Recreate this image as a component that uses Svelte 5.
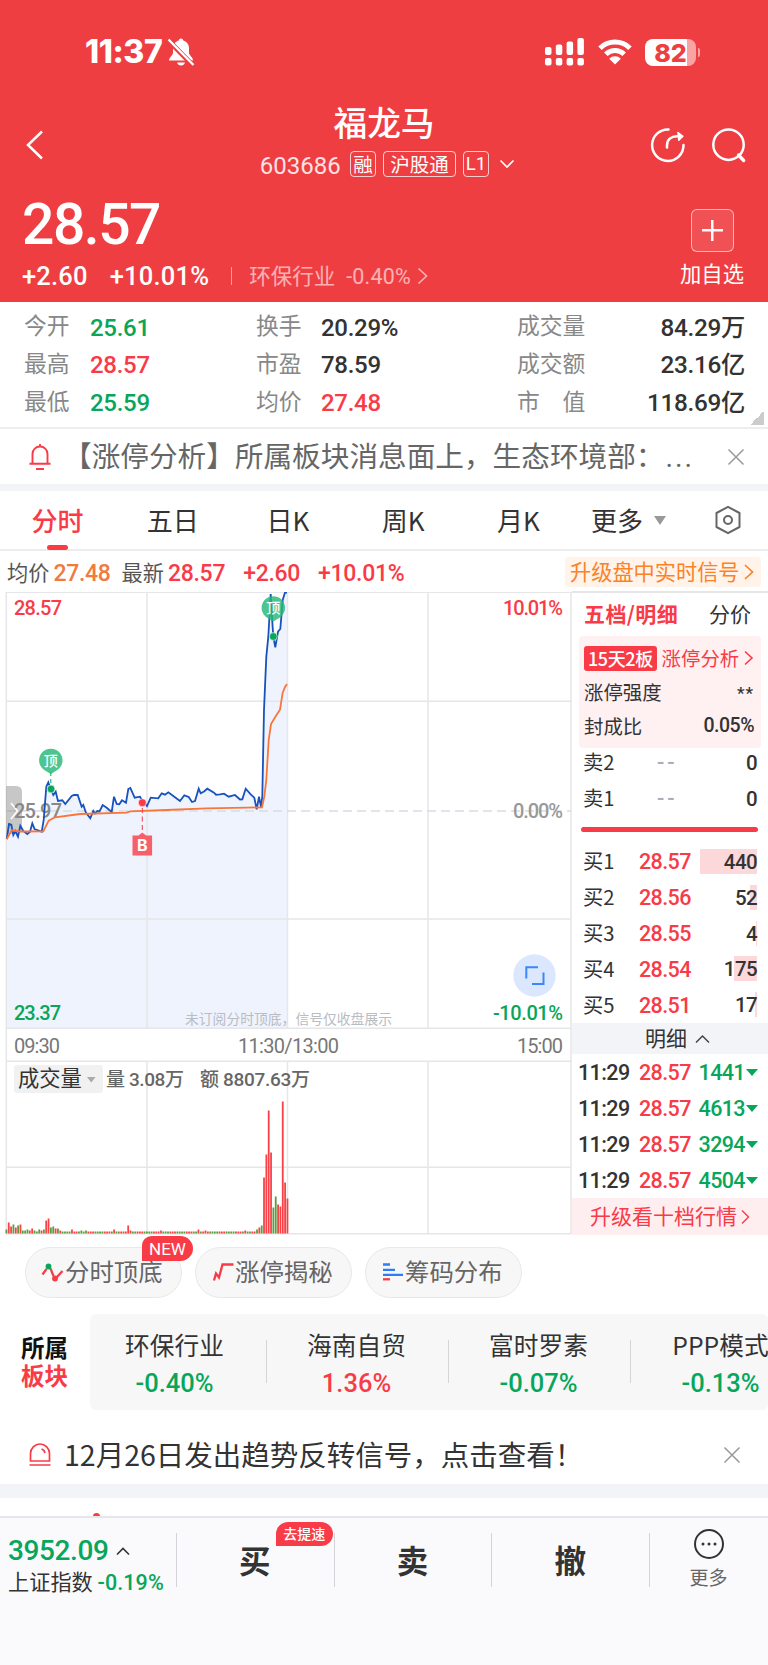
<script lang="ts">
  const stats = [
    [
      { label: "今开", value: "25.61", tone: "down" },
      { label: "换手", value: "20.29%", tone: "" },
      { label: "成交量", value: "84.29万", tone: "" },
    ],
    [
      { label: "最高", value: "28.57", tone: "up" },
      { label: "市盈", value: "78.59", tone: "" },
      { label: "成交额", value: "23.16亿", tone: "" },
    ],
    [
      { label: "最低", value: "25.59", tone: "down" },
      { label: "均价", value: "27.48", tone: "up" },
      { label: "市　值", value: "118.69亿", tone: "" },
    ],
  ];

  const tabs = ["分时", "五日", "日K", "周K", "月K"];

  const asks = [
    { name: "卖2", price: "--", amount: 0 },
    { name: "卖1", price: "--", amount: 0 },
  ];

  const bids = [
    { name: "买1", price: "28.57", amount: 440 },
    { name: "买2", price: "28.56", amount: 52 },
    { name: "买3", price: "28.55", amount: 4 },
    { name: "买4", price: "28.54", amount: 175 },
    { name: "买5", price: "28.51", amount: 17 },
  ];
  const maxBid = 440;

  const trades = [
    { time: "11:29", price: "28.57", amount: 1441 },
    { time: "11:29", price: "28.57", amount: 4613 },
    { time: "11:29", price: "28.57", amount: 3294 },
    { time: "11:29", price: "28.57", amount: 4504 },
  ];

  const sectors = [
    { name: "环保行业", change: "-0.40%" },
    { name: "海南自贸", change: "1.36%" },
    { name: "富时罗素", change: "-0.07%" },
    { name: "PPP模式", change: "-0.13%" },
  ];

  const priceLine =
    "6.7,247 9,232 11.3,232.7 13.3,243 15.3,239 18,244.7 20.3,233.7 23.3,239 27.3,242 30,239.7 32.3,231.3 34.7,237.3 37.3,238 41.7,239.7 43.7,228 46.3,194.7 48.3,190.3 50.7,197 53.3,203 55.7,199.7 58,209 62.3,208.3 65.3,212 71.7,204 74,203 77.7,203 81.7,214.7 83.3,213 86,220.7 90.3,226.3 93.3,219 95,221.5 97.3,219 99.5,219.5 102.7,213 106.7,215.7 111.7,220 114,204.7 116.7,212 119.3,212.3 122,208.3 126,210.7 128.3,197 130.3,196 134.7,205.7 140,204.7 142.3,208.7 147,214 150.7,205.7 158.3,206.3 161.7,201.3 165,202.7 168.3,200.3 173.3,204 180,209 184.3,203.3 188.7,205 192,210 195,209 198.7,196.7 200.7,201.3 204,199.5 207.3,196.7 214,200.7 216,202.7 220,202.3 224,201.7 228.7,204.7 235,203 240,207.5 242.3,207.3 245.7,196.7 250.7,202.3 254.3,205.7 256.7,217.3 259,204.7 261,214.7 262.3,204.7 264,118 266.3,64.7 268.3,44.7 270.7,2 272.3,29.7 273.3,44.7 275.3,55.3 278,39.7 280.3,37 282.7,8 285,0.5 287,0.5";

  const averageLine =
    "6.7,247.3 11.7,238.3 20,239.5 43.3,239.3 48.7,228.7 55,225.3 80,222 126.7,220.7 130,219.3 166.7,218 206.7,216.3 246.7,215.7 262,215.3 264.3,204.7 266.3,188 268.7,148 271,132 276,123.7 280,117.7 282.7,100.7 285,95 287,92";

  // one bar a minute; quiet minutes fall back to a two pixel bar
  const peaks: Record<number, [number, string]> = {
    0: [4, "g"], 1: [11, "r"], 2: [7, "r"], 3: [9, "g"], 4: [6, "r"], 5: [8, "g"],
    6: [9, "r"], 7: [3, "g"], 8: [3, "g"], 9: [4, "g"], 10: [3, "r"], 11: [5, "r"],
    12: [3, "g"], 14: [4, "g"], 15: [3, "r"], 16: [4, "g"], 17: [13, "r"], 18: [15, "r"],
    19: [6, "g"], 20: [7, "g"], 21: [5, "r"], 22: [5, "g"], 23: [3, "r"], 28: [4, "r"],
    32: [3, "g"], 34: [3, "g"], 46: [4, "r"], 52: [8, "r"], 53: [3, "r"], 66: [3, "r"],
    82: [4, "r"], 85: [3, "r"], 102: [3, "r"], 107: [4, "g"], 108: [6, "r"], 109: [8, "g"],
    110: [56, "r"], 111: [79, "r"], 112: [123, "r"], 113: [81, "r"], 114: [26, "g"],
    115: [37, "g"], 116: [29, "r"], 117: [27, "r"], 118: [132, "r"], 119: [51, "r"], 120: [35, "r"],
  };
  const volumes = Array.from({ length: 121 }, (_, i) => {
    const [height, tone] = peaks[i] ?? [2, i % 7 < 3 ? "r" : "g"];
    return { x: 5.5 + i * 2.342, height, fill: tone === "r" ? "#fb4148" : "#5a9e3d" };
  });
</script>

<div class="page">
  <header>
    <div class="status">
      <span class="clock">11:37</span>
      <svg class="mute" width="28" height="30" viewBox="0 0 28 30">
        <path d="M14 1.500c-1.300 0-2 .8-2.300 1.900C8 4.500 6 7.500 6 11v5c0 2-4 4.500-4 7.500h24c0-3-4-5.500-4-7.500v-5c0-3.500-2-6.500-5.700-7.600-.3-1.100-1-1.900-2.300-1.900zM10 25.500h8c-.6 2-2 3-4 3s-3.400-1-4-3z" fill="#fff" />
        <path d="M1.500 3.500 26 28.500" stroke="#ef3e41" stroke-width="5" />
        <path d="M1.500 2.500 26.500 28" stroke="#fff" stroke-width="2.300" />
      </svg>
      <div class="spacer"></div>
      <svg width="40" height="28" viewBox="0 0 40 28" fill="#fff">
        <rect x="0" y="9" width="6.500" height="8" rx="2" />
        <rect x="10.800" y="6.500" width="6.500" height="10.500" rx="2" />
        <rect x="21.600" y="3.500" width="6.500" height="13.500" rx="2" />
        <rect x="32.400" y="0" width="6.500" height="17" rx="2" />
        <rect x="0" y="20" width="6.500" height="7.500" rx="2" />
        <rect x="10.800" y="20" width="6.500" height="7.500" rx="2" />
        <rect x="21.600" y="20" width="6.500" height="7.500" rx="2" />
        <rect x="32.400" y="20" width="6.500" height="7.500" rx="2" />
      </svg>
      <svg class="wifi" width="36" height="26" viewBox="0 0 36 26">
        <path d="M3 9.200a21.500 21.500 0 0 1 30 0M8.800 15.200a13 13 0 0 1 18.400 0" fill="none" stroke="#fff" stroke-width="5" />
        <path d="M18 25.500l-5.800-5.800a8.300 8.300 0 0 1 11.600 0z" fill="#fff" />
      </svg>
      <div class="battery"><span>82</span></div>
      <i class="cap"></i>
    </div>

    <div class="titlebar">
      <svg class="back" width="20" height="32" viewBox="0 0 20 32">
        <path d="M17 2.500 3 16l14 13.500" fill="none" stroke="#fff" stroke-width="2.500" />
      </svg>
      <div class="name">
        <h1>福龙马</h1>
        <div class="code">
          <span class="num">603686</span>
          <b>融</b><b class="wide">沪股通</b><b class="num">L1</b>
          <svg width="16" height="10" viewBox="0 0 16 10">
            <path d="M1.500 1.500 8 8l6.500-6.500" fill="none" stroke="#fff" stroke-width="1.600" />
          </svg>
        </div>
      </div>
      <div class="actions">
        <svg width="36" height="37" viewBox="0 0 36 37" fill="none" stroke="#fff" stroke-width="2.500" stroke-linecap="round">
          <path d="M18.500 2.500A15.700 15.700 0 1 0 33.500 18" />
          <path d="M17 20.500v-2c0-6 4-9.200 10-9.200h5" />
          <path d="M28 5.500l4.800 3.800-4 4z" fill="#fff" stroke-width="1.500" stroke-linejoin="round" />
        </svg>
        <svg width="36" height="37" viewBox="0 0 36 37" fill="none" stroke="#fff" stroke-width="2.500">
          <circle cx="17.500" cy="17.700" r="15.200" />
          <path d="M27.500 28l5.200 5.500" stroke-width="3.300" stroke-linecap="round" />
        </svg>
      </div>
    </div>

    <div class="quote">
      <div>
        <div class="price num">28.57</div>
        <div class="changes">
          <span class="num">+2.60</span>
          <span class="num pct">+10.01%</span>
          <i></i>
          <span class="industry">环保行业</span>
          <span class="num soft">-0.40%</span>
          <svg width="12" height="18" viewBox="0 0 12 18">
            <path d="M1.500 1.500 9.500 9l-8 7.500" fill="none" stroke="#fff" stroke-opacity=".6" stroke-width="1.700" />
          </svg>
        </div>
      </div>
      <div class="add">
        <div class="plus"></div>
        加自选
      </div>
    </div>
  </header>

  <section class="stats">
    {#each stats as row}
      <div class="stat-row">
        {#each row as item}
          <span class="label">{item.label}</span>
          <span class="num value {item.tone}">{item.value}</span>
        {/each}
      </div>
    {/each}
    <i class="corner"></i>
  </section>

  <section class="notice">
    <svg width="24" height="28" viewBox="0 0 24 28" fill="none" stroke="#f93b48" stroke-width="1.900">
      <path d="M4.500 20.500V11a7.500 7.500 0 0 1 15 0v9.500M1.500 20.800h21M8 26h8M12 3.500V1" />
    </svg>
    <p>【涨停分析】所属板块消息面上，生态环境部：<span>...</span></p>
    <svg width="18" height="18" viewBox="0 0 18 18">
      <path d="M1.500 1.500l15 15M16.500 1.500l-15 15" stroke="#999" stroke-width="1.500" />
    </svg>
  </section>

  <nav>
    {#each tabs as tab, i}
      <span class:active={i === 0}>{tab}</span>
    {/each}
    <span class="more">更多<i></i></span>
    <svg width="28" height="30" viewBox="0 0 28 30" fill="none" stroke="#666" stroke-width="2">
      <path d="M14 1.800 25.500 8v14L14 28.200 2.500 22V8z" stroke-linejoin="round" />
      <circle cx="14" cy="15" r="4" />
    </svg>
  </nav>

  <div class="summary">
    <span>均价</span><span class="num avg">27.48</span>
    <span class="latest">最新</span><span class="num up">28.57</span>
    <span class="num up gain">+2.60</span><span class="num up gain">+10.01%</span>
    <a class="promo" href="#signal"><span>升级盘中实时信号</span>
      <svg width="10" height="18" viewBox="0 0 10 18"><path d="M1 2l7.500 7L1 16" fill="none" stroke="#fa8227" stroke-width="1.700" /></svg>
    </a>
  </div>

  <main>
    <svg class="chart" width="572" height="643" viewBox="0 0 572 643">
      <polygon points="{priceLine} 287,436 6.700,436" fill="#eff3fe" />
      <g stroke="#e6e6e8" stroke-width="1.500">
        <path d="M6 .3h566M6 109.200h565M6 327h565M6 436.300h565M6 469.300h565M6 575.200h565M6 641.700h565" />
        <path d="M6.300 0v642M147 0v436M287.500 0v436M428 0v436M147 469v173M287.500 469v173M428 469v173M571 0v642" />
      </g>
      <path d="M7 219h564" stroke="#d3dde6" stroke-width="1.700" stroke-dasharray="9 5" />
      <path d="M6 194h10q6 0 6 6v36q0 6-6 6H6z" fill="#999" opacity=".55" />
      <path d="M11 211l6.500 8-6.500 8" fill="none" stroke="#fff" stroke-width="1.600" />

      <g class="num">
        <text x="14" y="23" textLength="48" fill="#f93b48">28.57</text>
        <text x="14" y="226" textLength="48" fill="#888">25.97</text>
        <text x="14" y="428" textLength="47" fill="#07a65a">23.37</text>
        <text x="503" y="23" textLength="60" fill="#f93b48">10.01%</text>
        <text x="513" y="226" textLength="50" fill="#999">0.00%</text>
        <text x="493" y="428" textLength="70" fill="#07a65a">-10.01%</text>
        <text x="14" y="461" textLength="46" class="hour">09:30</text>
        <text x="238" y="461" textLength="101" class="hour">11:30/13:00</text>
        <text x="517" y="461" textLength="46" class="hour">15:00</text>
      </g>

      <polyline points={priceLine} fill="none" stroke="#1852bd" stroke-width="1.800" />
      <polyline points={averageLine} fill="none" stroke="#f9763a" stroke-width="1.800" />
      <text x="185" y="432" font-size="13.800" fill="#b9bcc1" textLength="207">未订阅分时顶底，信号仅收盘展示</text>

      <path d="M50.800 180v16" stroke="#07a65a" stroke-dasharray="4 3" />
      <g fill="#27b877" fill-opacity=".82">
        <path d="M45 178.500A11.700 11.700 0 1 1 56.600 178.500L50.800 182z" />
        <path d="M267.500 26A11.700 11.700 0 1 1 279.100 26L273.300 29.500z" />
      </g>
      <text class="pin" x="50.800" y="173.500">顶</text>
      <text class="pin" x="273.300" y="21">顶</text>
      <circle cx="51" cy="197" r="3.900" fill="#07a65a" stroke="#fff" stroke-width=".6" />
      <circle cx="273.300" cy="44.500" r="3.900" fill="#07a65a" stroke="#fff" stroke-width=".6" />
      <circle cx="142.300" cy="210.700" r="4" fill="#f93b48" stroke="#fff" stroke-width=".6" />
      <path d="M142.300 216v24" stroke="#f93b48" stroke-dasharray="5 3.500" />
      <path d="M132.500 243.500h6l3.800-3 3.800 3h6V263.500h-19.600z" fill="#f75f6b" />
      <text class="pin buy" x="142.300" y="259">B</text>

      <circle cx="534.500" cy="383.500" r="21.200" fill="#dbe7fd" />
      <path d="M526.300 386.500v-11.200H538M532 391.900h11.500V380.500" fill="none" stroke="#3a86fb" stroke-width="2" />

      <rect x="14" y="473" width="89" height="28" rx="3" fill="#f1f1f1" />
      <text x="18" y="494" font-size="21.300" fill="#333">成交量</text>
      <path d="M87 485h8.500l-4.200 5.500z" fill="#aaa" />
      <g class="num total">
        <text x="106" y="494" textLength="78">量 3.08万</text>
        <text x="200" y="494" textLength="110">额 8807.63万</text>
      </g>
      {#each volumes as bar}
        <rect x={bar.x} y={641.5 - bar.height} width="1.800" height={bar.height} fill={bar.fill} />
      {/each}
    </svg>

    <aside>
      <div class="book-tabs"><b>五档/明细</b><span>分价</span></div>
      <div class="limit">
        <div class="up"><em>15天2板</em><span>涨停分析</span>
          <svg width="10" height="16" viewBox="0 0 10 16"><path d="M1 1.500 8 8l-7 6.500" fill="none" stroke="#f93b48" stroke-width="1.600" /></svg>
        </div>
        <div><span>涨停强度</span><span class="num stars">**</span></div>
        <div><span>封成比</span><span class="num">0.05%</span></div>
      </div>
      <div class="asks">
        {#each asks as row}
          <div class="level"><span>{row.name}</span><span class="num dash">{row.price}</span><span class="num amount">{row.amount}</span></div>
        {/each}
      </div>
      <div class="pressure"></div>
      {#each bids as row}
        <div class="level">
          <span>{row.name}</span>
          <span class="num up">{row.price}</span>
          <span class="num amount">
            <i style="width: {Math.max(1, (row.amount / maxBid) * 57)}px"></i>{row.amount}
          </span>
        </div>
      {/each}
      <div class="detail"><span>明细</span>
        <svg width="15" height="10" viewBox="0 0 15 10"><path d="M1 8.500 7.500 2 14 8.500" fill="none" stroke="#444" stroke-width="1.500" /></svg>
      </div>
      {#each trades as trade}
        <div class="trade num"><span>{trade.time}</span><span class="up">{trade.price}</span><span class="down">{trade.amount}<i></i></span></div>
      {/each}
      <div class="upgrade"><span>升级看十档行情</span>
        <svg width="9" height="16" viewBox="0 0 9 16"><path d="M1 1.500 7.500 8 1 14.500" fill="none" stroke="#f93b48" stroke-width="1.400" /></svg>
      </div>
    </aside>
  </main>

  <section class="tools">
    <div class="pill">
      <svg width="24" height="26" viewBox="0 0 24 26" fill="none" stroke-width="2.300">
        <path d="M1.500 14.500 5.500 9M9.500 8.500l3 7.500M15.500 17.500l6-6.500" stroke="#f93b48" />
        <circle cx="7.500" cy="6.500" r="2.900" fill="#07a65a" /><circle cx="14" cy="18.500" r="2.900" fill="#f93b48" />
      </svg><span>分时顶底</span><b class="badge">NEW</b>
    </div>
    <div class="pill">
      <svg width="24" height="26" viewBox="0 0 24 26">
        <path d="M3 20.500 5 13.500l3 4L11.500 4.500h11" fill="none" stroke="#f93b48" stroke-width="2.300" />
      </svg><span>涨停揭秘</span>
    </div>
    <div class="pill">
      <svg width="24" height="26" viewBox="0 0 24 26" fill="none" stroke-width="2.300">
        <path d="M2 4.500h7M2 9.800h12M2 14.800h20" stroke="#2f7cf6" /><path d="M2 19.300h7" stroke="#f93b48" />
      </svg><span>筹码分布</span>
    </div>
  </section>

  <section class="sectors">
    <div class="belongs">
      <div>所属</div>
      <div class="up">板块</div>
    </div>
    <div class="strip">
      {#each sectors as sector}
        <div class="sector">
          {sector.name}
          <span class="num {sector.change.startsWith('-') ? 'down' : 'up'}">{sector.change}</span>
        </div>
      {/each}
    </div>
  </section>

  <section class="signal">
    <svg width="24" height="26" viewBox="0 0 24 26" fill="none" stroke="#f93b48" stroke-width="1.700">
      <path d="M2.500 19v-7.500a9.500 9.500 0 0 1 19 0V19zM1.500 23h21M13.500 7c2 .6 3.200 2 3.500 4" />
    </svg>
    <p>12月26日发出趋势反转信号，点击查看！</p>
    <svg width="18" height="18" viewBox="0 0 18 18">
      <path d="M1.500 1.500l15 15M16.500 1.500l-15 15" stroke="#999" stroke-width="1.500" />
    </svg>
  </section>

  <div class="peek"><i></i></div>

  <footer>
    <div class="index">
      <div class="num down points">3952.09
        <svg width="14" height="9" viewBox="0 0 14 9"><path d="M1 7.500 7 1.500l6 6" fill="none" stroke="#333" stroke-width="1.600" /></svg>
      </div>
      <div class="index-name">上证指数 <span class="num down">-0.19%</span></div>
    </div>
    <div class="trade-btn">买<b class="badge">去提速</b></div>
    <div class="trade-btn">卖</div>
    <div class="trade-btn">撤</div>
    <div class="menu">
      <svg width="32" height="32" viewBox="0 0 32 32">
        <circle cx="16" cy="16" r="14" fill="none" stroke="#333" stroke-width="2" />
        <g fill="#333"><circle cx="10" cy="16" r="1.500" /><circle cx="16" cy="16" r="1.500" /><circle cx="22" cy="16" r="1.500" /></g>
      </svg>
      更多
    </div>
  </footer>
</div>

<style>
  :global(body) {
    background: #fff;
  }

  .page {
    width: 768px;
    height: 1665px;
    overflow: hidden;
    display: flex;
    flex-direction: column;
    font-family: "Noto Sans CJK SC", sans-serif;
    color: #333;
    line-height: 1;
    white-space: nowrap;
  }

  .page > * {
    flex-shrink: 0;
    box-sizing: border-box;
  }

  svg {
    display: block;
    flex-shrink: 0;
  }

  h1, p {
    margin: 0;
  }

  .num {
    font-family: Roboto, "Noto Sans CJK SC", sans-serif;
    font-weight: 500;
  }

  .up {
    color: #f93b48;
  }

  .down {
    color: #07a65a;
  }

  header {
    height: 302px;
    background: #ef3e41;
    color: #fff;
  }

  .status {
    height: 104px;
    display: flex;
    align-items: center;
    padding: 0 68px 0 85px;
  }

  .clock {
    font: 800 32px/1 Inter, sans-serif;
    letter-spacing: -0.4px;
  }

  .mute {
    margin-left: 5px;
  }

  .spacer {
    flex: 1;
  }

  .wifi {
    margin: 0 12px 0 12px;
  }

  .battery {
    width: 51px;
    height: 27px;
    border-radius: 8px;
    background: linear-gradient(90deg, #fff 82%, #f8a3a4 82%);
    color: #ef3e41;
    font: 800 25px/28px Inter, sans-serif;
    text-align: center;
  }

  .cap {
    width: 2.5px;
    height: 9px;
    margin-left: 1.5px;
    border-radius: 0 3px 3px 0;
    background: #f8a3a4;
  }

  .titlebar {
    height: 90px;
    display: grid;
    grid-template-columns: 130px 1fr 130px;
  }

  .back {
    margin: 25px 0 0 25px;
  }

  .name {
    text-align: center;
  }

  h1 {
    font-size: 33.7px;
    font-weight: 500;
    line-height: 36px;
  }

  .code {
    display: flex;
    align-items: center;
    justify-content: center;
    margin-top: 10px;
    height: 28px;
    padding-left: 7px;
  }

  .code > .num:first-child {
    font-size: 24px;
    font-weight: 400;
    opacity: 0.85;
    margin: 3px 9px 0 0;
  }

  .code b {
    height: 24px;
    line-height: 23px;
    border: 1.3px solid rgba(255, 255, 255, 0.75);
    border-radius: 4px;
    font-size: 19.5px;
    font-weight: 400;
    margin-right: 7px;
    padding: 0 2.5px;
  }

  .code .wide {
    padding: 0 6px;
  }

  .code b.num {
    font-size: 18.5px;
    font-weight: 400;
    padding: 0 2px;
    line-height: 25px;
  }

  .code svg {
    margin-left: 3px;
  }

  .actions {
    display: flex;
    gap: 25px;
    padding-top: 23px;
    margin-left: 12px;
  }

  .quote {
    display: flex;
    justify-content: space-between;
  }

  .price {
    font-size: 57px;
    line-height: 61px;
    letter-spacing: -1.5px;
    padding-left: 22px;
  }

  .changes {
    display: flex;
    align-items: center;
    height: 34px;
    margin-top: 4px;
    padding-left: 22px;
    font-size: 25.5px;
  }

  .changes .num {
    letter-spacing: 0.2px;
    padding-top: 2px;
  }

  .pct {
    margin-left: 22px;
  }

  .changes i {
    width: 1px;
    height: 18px;
    margin: 0 17px 0 22px;
    background: rgba(255, 255, 255, 0.5);
  }

  .industry {
    font-size: 21.5px;
    line-height: 24px;
    margin-top: -2px;
    opacity: 0.6;
    margin-right: 11px;
  }

  .changes .soft {
    font-size: 21.5px;
    font-weight: 400;
    opacity: 0.6;
    margin-right: 6px;
  }

  .add {
    width: 64px;
    margin: 15px 24px 0 0;
    font-size: 21.3px;
    display: flex;
    flex-direction: column;
    align-items: center;
    gap: 10px;
  }

  .plus {
    width: 41px;
    height: 41px;
    border: 1px solid rgba(255, 255, 255, 0.6);
    border-radius: 6px;
    background:
      linear-gradient(#fff, #fff) center / 21px 2.5px no-repeat,
      linear-gradient(#fff, #fff) center / 2.5px 21px no-repeat,
      rgba(255, 255, 255, 0.1);
  }

  .stats {
    position: relative;
    height: 127px;
    padding: 6px 23px 0 25px;
    border-bottom: 2px solid #ededed;
  }

  .stat-row {
    display: grid;
    grid-template-columns: 65px 167px 64px 197px 80px 1fr;
    align-items: center;
    height: 37.6px;
    font-size: 22.8px;
  }

  .stat-row .label {
    color: #888;
    margin-top: -2px;
    margin-left: -1px;
  }

  .stat-row .value {
    font-size: 24px;
    letter-spacing: -0.3px;
    padding-top: 2px;
  }

  .stat-row .value:last-child {
    text-align: right;
    font-size: 24.3px;
  }

  .corner {
    position: absolute;
    right: 4px;
    bottom: 2px;
    width: 14px;
    height: 14px;
    background: linear-gradient(135deg, transparent 50%, #ccc 50%);
  }

  .notice {
    height: 55px;
    display: flex;
    align-items: center;
    padding: 0 23px 0 28px;
  }

  .notice p {
    flex: 1;
    margin-left: 11px;
    font-size: 28.65px;
    color: #666;
  }

  .notice p span {
    font-family: Roboto, sans-serif;
    letter-spacing: 2px;
    margin-left: 1px;
  }

  nav {
    height: 67px;
    border-top: 7px solid #f2f4f8;
    border-bottom: 2px solid #ececec;
    display: grid;
    grid-template-columns: repeat(5, 115.2px) 1fr 28px;
    align-items: center;
    padding-right: 26px;
    font-size: 26px;
    text-align: center;
  }

  nav span {
    line-height: 58px;
    height: 58px;
  }

  .active {
    position: relative;
    color: #f93b48;
    font-weight: 500;
  }

  .active::after {
    content: "";
    position: absolute;
    left: 47px;
    bottom: -1px;
    width: 21px;
    height: 5px;
    border-radius: 3px;
    background: #f93b48;
  }

  .more {
    display: flex;
    align-items: center;
    padding-left: 15px;
  }

  .more i {
    margin-left: 11px;
    border: solid transparent;
    border-width: 9px 6.5px 0;
    border-top-color: #999;
  }

  .summary {
    height: 41px;
    display: flex;
    align-items: center;
    padding: 0 7px 0 7px;
    font-size: 21.2px;
    color: #555;
  }

  .summary .num {
    font-size: 23px;
    letter-spacing: -0.3px;
    margin-left: 4px;
    padding-top: 3px;
  }

  .summary .avg {
    color: #f07b3c;
  }

  .latest {
    margin-left: 11px;
  }

  .summary .gain {
    margin-left: 18px;
  }

  .promo {
    margin-left: auto;
    height: 30px;
    width: 191px;
    padding-left: 5px;
    border-radius: 4px;
    background: #fff3ea;
    color: #fa8227;
    display: flex;
    align-items: center;
    gap: 4px;
    text-decoration: none;
  }

  .promo span {
    margin-top: -2px;
  }

  main {
    display: flex;
    height: 643px;
  }

  .chart .num {
    font-size: 20px;
  }

  .chart .hour {
    fill: #777;
    font-weight: 400;
  }

  .chart .total {
    font-size: 19px;
    fill: #666;
  }

  .pin {
    font-size: 14px;
    font-weight: 500;
    fill: #fff;
    text-anchor: middle;
  }

  .buy {
    font: 700 16px Inter, sans-serif;
  }

  aside {
    flex: 1;
    height: 642px;
    border-top: 2px solid #e6e6e8;
    box-sizing: border-box;
    font-size: 20.3px;
    margin-top: -1px;
  }

  .book-tabs {
    height: 43px;
    box-sizing: border-box;
    display: flex;
    align-items: center;
    justify-content: space-between;
    padding: 0 17px 3px 12px;
    font-size: 21px;
  }

  .book-tabs b {
    color: #f93b48;
    font-weight: 700;
    letter-spacing: 0.4px;
  }

  .limit {
    margin: 0 7px;
    height: 112px;
    padding: 5px 7px 0 5px;
    box-sizing: border-box;
    background: #fff0f1;
    border-radius: 4px;
    font-size: 19.4px;
  }

  .limit div {
    height: 34px;
    display: flex;
    align-items: center;
    justify-content: space-between;
  }

  .limit .num {
    letter-spacing: -0.5px;
    font-size: 19.5px;
  }

  .limit .stars {
    letter-spacing: 1px;
    padding-top: 2px;
    font-size: 17px;
  }

  em {
    padding: 0 4px;
    border-radius: 3px;
    background: #f93b48;
    color: #fff;
    font-size: 18px;
    font-style: normal;
    font-weight: 500;
    line-height: 25px;
    letter-spacing: -0.4px;
  }

  .asks {
    margin-top: -3px;
  }

  .level {
    display: grid;
    grid-template-columns: 56px 59px 1fr;
    align-items: center;
    height: 35.9px;
    padding: 0 11px 0 11px;
  }

  .level > span:first-child {
    margin-top: -3px;
  }

  .level .num {
    font-size: 21.5px;
    letter-spacing: -0.6px;
  }

  .level .dash {
    color: #a5b0bc;
    letter-spacing: 3px;
    padding-left: 18px;
  }

  .level .amount {
    position: relative;
    text-align: right;
    line-height: 26px;
    font-size: 20.5px;
    z-index: 0;
  }

  .amount i {
    position: absolute;
    right: 0;
    top: 0;
    height: 25px;
    background: #fdd8db;
    z-index: -1;
  }

  .pressure {
    height: 5px;
    margin: 10px 10px 12px 9px;
    border-radius: 3px;
    background: #f93b48;
  }

  .detail,
  .upgrade {
    display: flex;
    align-items: center;
    justify-content: center;
    gap: 8px;
    height: 31px;
    font-size: 21px;
    background: #f3f4f8;
  }

  .detail {
    padding-left: 15px;
  }

  .detail span,
  .upgrade span {
    margin-top: -3px;
  }

  .trade {
    display: grid;
    grid-template-columns: 61px 54px 1fr;
    align-items: center;
    height: 36px;
    padding: 1px 10px 0 6px;
    box-sizing: border-box;
    font-size: 21.5px;
    letter-spacing: -0.6px;
  }

  .trade .down {
    display: flex;
    justify-content: flex-end;
    align-items: center;
    gap: 1px;
  }

  .trade i {
    border: solid transparent;
    border-width: 7px 6.5px 0;
    border-top-color: #07a65a;
  }

  .upgrade {
    height: 37px;
    gap: 4px;
    background: #feeef0;
    color: #f93b48;
  }

  .tools {
    display: flex;
    gap: 13px;
    height: 79px;
    padding: 12px 25px 0;
  }

  .pill {
    position: relative;
    display: flex;
    align-items: center;
    width: 157px;
    height: 51px;
    box-sizing: border-box;
    padding-left: 15px;
    border: 1px solid #e8e8e8;
    border-radius: 26px;
    background: #f7f7f7;
    font-size: 24.4px;
    color: #666;
  }

  .pill span {
    margin-top: -2px;
  }

  .badge {
    position: absolute;
    background: #f93b48;
    color: #fff;
    text-align: center;
  }

  .pill .badge {
    right: -12px;
    top: -12px;
    width: 51px;
    height: 25px;
    border-radius: 10px 13px 13px 0;
    font: 400 17px/26px Roboto, sans-serif;
  }

  .sectors {
    display: flex;
    height: 96px;
  }

  .belongs {
    width: 90px;
    box-sizing: border-box;
    padding: 19px 0 0 21px;
    font-size: 23.5px;
    line-height: 28px;
    font-weight: 700;
    color: #111;
  }

  .belongs .up {
    color: #f93b48;
  }

  .strip {
    display: flex;
    background: #f7f7f7;
    border-radius: 6px;
    flex: 1;
    overflow: hidden;
  }

  .sector {
    width: 182px;
    flex-shrink: 0;
    display: flex;
    flex-direction: column;
    align-items: center;
    gap: 14px;
    padding: 18px 13px 0 0;
    box-sizing: border-box;
    font-size: 24.7px;
    background: linear-gradient(#d5d5d5, #d5d5d5) 176px 26px / 1px 43px no-repeat;
  }

  .sector .num {
    font-size: 25.5px;
  }

  .signal {
    height: 74px;
    display: flex;
    align-items: center;
    padding: 15px 27px 0 28px;
  }

  .signal p {
    flex: 1;
    margin-left: 12px;
    font-size: 28.5px;
  }

  .peek {
    height: 32px;
    border-top: 14px solid #f2f4f8;
    display: flex;
    align-items: flex-end;
    overflow: hidden;
  }

  .peek i {
    width: 7px;
    height: 7px;
    margin: 0 0 -4px 93px;
    border-radius: 50%;
    background: #f93b48;
  }

  footer {
    flex: 1;
    border-top: 2px solid #e6e7ea;
    background: #fafafd;
    display: flex;
  }

  .index {
    width: 176px;
    box-sizing: border-box;
    padding: 19px 0 0 8px;
  }

  .points {
    display: flex;
    align-items: center;
    gap: 8px;
    font-size: 28px;
    letter-spacing: -0.4px;
  }

  .index-name {
    margin-top: 5px;
    font-size: 21.2px;
  }

  .index-name .num {
    font-size: 21.5px;
    letter-spacing: 0.1px;
  }

  .trade-btn {
    position: relative;
    width: 157.7px;
    padding-top: 26px;
    text-align: center;
    font-size: 31.5px;
    font-weight: 700;
    background: linear-gradient(#d3d4d8, #d3d4d8) 0 15px / 1px 54px no-repeat;
  }

  .trade-btn .badge {
    right: 1px;
    top: 4px;
    width: 57px;
    height: 24px;
    border-radius: 12px 12px 12px 0;
    font-size: 14px;
    font-weight: 500;
    line-height: 22px;
  }

  .menu {
    flex: 1;
    display: flex;
    flex-direction: column;
    align-items: center;
    gap: 7px;
    padding-top: 10px;
    font-size: 19px;
    color: #666;
    background: linear-gradient(#d3d4d8, #d3d4d8) 0 15px / 1px 54px no-repeat;
  }
</style>
